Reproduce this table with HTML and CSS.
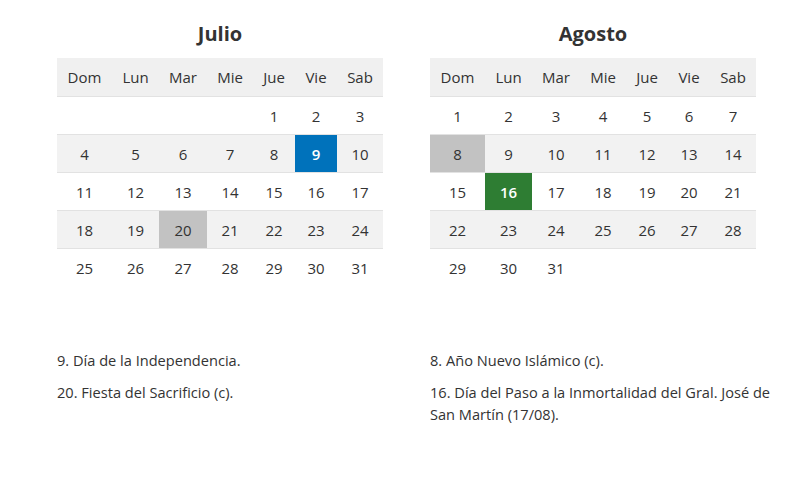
FILE: index.html
```html
<!DOCTYPE html>
<html lang="es">
<head>
<meta charset="utf-8">
<title>Feriados</title>
<link rel="stylesheet" href="styles.css">
</head>
<body>
<div class="page">
  <section class="month">
    <h3 class="month-title">Julio</h3>
    <table class="cal">
      <thead>
        <tr><th>Dom</th><th>Lun</th><th>Mar</th><th>Mie</th><th>Jue</th><th>Vie</th><th>Sab</th></tr>
      </thead>
      <tbody>
        <tr><td></td><td></td><td></td><td></td><td>1</td><td>2</td><td>3</td></tr>
        <tr><td>4</td><td>5</td><td>6</td><td>7</td><td>8</td><td class="hol-blue">9</td><td>10</td></tr>
        <tr><td>11</td><td>12</td><td>13</td><td>14</td><td>15</td><td>16</td><td>17</td></tr>
        <tr><td>18</td><td>19</td><td class="hol-gray">20</td><td>21</td><td>22</td><td>23</td><td>24</td></tr>
        <tr><td>25</td><td>26</td><td>27</td><td>28</td><td>29</td><td>30</td><td>31</td></tr>
      </tbody>
    </table>
  </section>
  <section class="month">
    <h3 class="month-title">Agosto</h3>
    <table class="cal">
      <thead>
        <tr><th>Dom</th><th>Lun</th><th>Mar</th><th>Mie</th><th>Jue</th><th>Vie</th><th>Sab</th></tr>
      </thead>
      <tbody>
        <tr><td>1</td><td>2</td><td>3</td><td>4</td><td>5</td><td>6</td><td>7</td></tr>
        <tr><td class="hol-gray">8</td><td>9</td><td>10</td><td>11</td><td>12</td><td>13</td><td>14</td></tr>
        <tr><td>15</td><td class="hol-green">16</td><td>17</td><td>18</td><td>19</td><td>20</td><td>21</td></tr>
        <tr><td>22</td><td>23</td><td>24</td><td>25</td><td>26</td><td>27</td><td>28</td></tr>
        <tr><td>29</td><td>30</td><td>31</td><td></td><td></td><td></td><td></td></tr>
      </tbody>
    </table>
  </section>
  <div class="notes">
    <p>9. Día de la Independencia.</p>
    <p>20. Fiesta del Sacrificio (c).</p>
  </div>
  <div class="notes">
    <p>8. Año Nuevo Islámico (c).</p>
    <p>16. Día del Paso a la Inmortalidad del Gral. José de San Martín (17/08).</p>
  </div>
</div>
</body>
</html>
```

FILE: styles.css
```css
html, body {
  margin: 0;
  padding: 0;
  background: #fff;
}
body {
  font-family: "Open Sans", "Noto Sans", sans-serif;
  color: #333;
}
.page {
  display: grid;
  grid-template-columns: 358px 358px;
  column-gap: 15px;
  row-gap: 63px;
  padding: 22px 0 0 57px;
}
.month {
  width: 326px;
}
.month-title {
  margin: 0 0 12px;
  font-size: 20px;
  line-height: 24px;
  font-weight: 700;
  text-align: center;
  color: #333;
}
.cal {
  width: 326px;
  border-collapse: collapse;
  table-layout: fixed;
  font-size: 15px;
}
.cal th, .cal td {
  height: 37px;
  padding: 0;
  text-align: center;
  vertical-align: middle;
  font-weight: 400;
}
.cal tr {
  border-top: 1px solid #e2e2e2;
}
.cal thead tr {
  border-top: 0;
  background: #f0f0f0;
}
.cal thead th {
  height: 38px;
}
.cal tbody tr:nth-child(even) {
  background: #f2f2f2;
}
.cal th:nth-child(1) { width: 55px; }
.cal th:nth-child(2) { width: 47px; }
.cal th:nth-child(3) { width: 48px; }
.cal th:nth-child(4) { width: 46px; }
.cal th:nth-child(5) { width: 42px; }
.cal th:nth-child(6) { width: 42px; }
.cal th:nth-child(7) { width: 46px; }
.cal td.hol-blue {
  background: #0072bb;
  color: #fff;
  font-weight: 600;
}
.cal td.hol-green {
  background: #2e7d33;
  color: #fff;
  font-weight: 600;
}
.cal td.hol-gray {
  background: #c2c2c2;
}
.notes p {
  margin: 0 0 10px;
  font-size: 14.6px;
  line-height: 22px;
}
```
